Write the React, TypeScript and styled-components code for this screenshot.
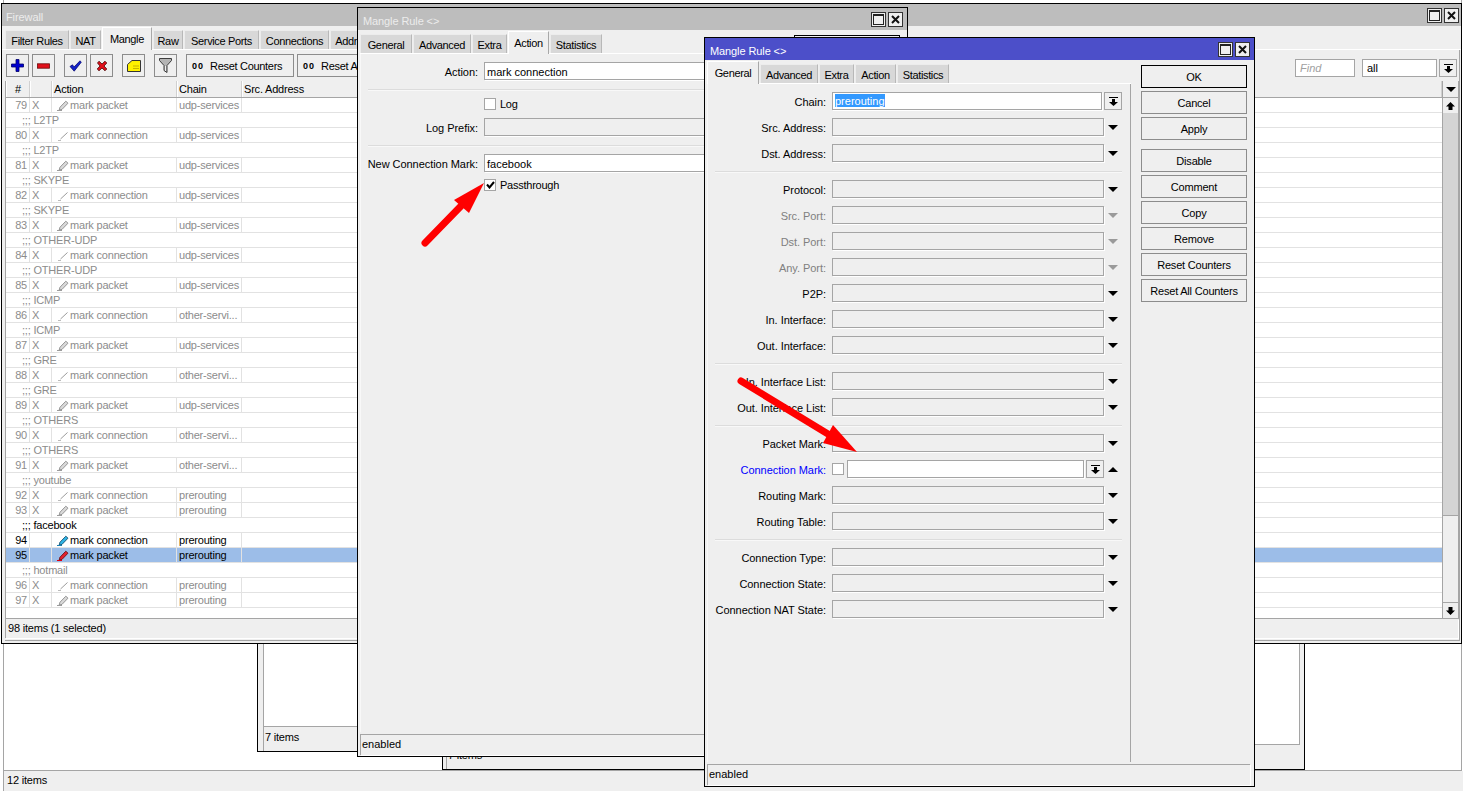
import React from "react";
import styled, { createGlobalStyle } from "styled-components";

const Global = createGlobalStyle`
  html, body { margin: 0; padding: 0; background: #fff; overflow: hidden; }
  body { font-family: "Liberation Sans", Arial, sans-serif; font-size: 11px; color: #000; }
`;

const Desktop = styled.div`
  position: relative; width: 1463px; height: 791px; overflow: hidden; background: #fff;
  display: flex; flex-direction: column;
`;
const BaseList = styled.div`
  flex: 1; margin: 0 1px 0 3px; background: #fff;
  border-left: 1px solid #a5a5a5; border-right: 1px solid #a5a5a5; border-bottom: 1px solid #a5a5a5;
`;
const BaseStatus = styled.div`
  height: 20px; box-sizing: border-box; margin-left: 3px; padding: 0 0 2px 3px; background: #efefef;
  border-left: 1px solid #a5a5a5; display: flex; align-items: center; letter-spacing: -0.2px;
`;

const Win = styled.section<{ $x: number; $y: number; $w: number; $h: number }>`
  position: absolute; left: ${p => p.$x}px; top: ${p => p.$y}px; width: ${p => p.$w}px; height: ${p => p.$h}px;
  box-sizing: border-box; background: #efefef; border: 1px solid #000;
  display: flex; flex-direction: column;
`;
const Title = styled.header<{ $active?: boolean; $pl: number; $pr: number }>`
  flex: none; height: 22px; display: flex; align-items: center; justify-content: space-between;
  padding: 0 ${p => p.$pr}px 0 ${p => p.$pl}px; background: ${p => (p.$active ? "#4c4fc9" : "#bdbdbd")};
  color: ${p => (p.$active ? "#fff" : "#ececec")}; letter-spacing: -0.1px;
`;
const TitleText = styled.span`margin-top: 4px;`;
const WinBtns = styled.div`display: flex; gap: 2px;`;
const WinBtn = styled.div`
  width: 15px; height: 15px; box-sizing: border-box; border: 1px solid #333; background: #efefef;
  display: flex; align-items: center; justify-content: center;
`;

const TabBar = styled.div<{ $pl: number }>`
  flex: none; height: 24px; padding-left: ${p => p.$pl}px; display: flex; align-items: flex-end; gap: 1px;
  box-shadow: inset 0 -1px 0 #fff; box-sizing: border-box;
`;
const Tab = styled.div<{ $w: number; $on?: boolean }>`
  flex: none; width: ${p => p.$w}px; box-sizing: border-box; text-align: center; letter-spacing: -0.35px;
  height: ${p => (p.$on ? 23 : 19)}px; line-height: ${p => (p.$on ? 23 : 20)}px;
  background: ${p => (p.$on ? "#efefef" : "#d8d8d8")};
  border-top: 1px solid ${p => (p.$on ? "#fff" : "#ececec")};
  border-left: 1px solid ${p => (p.$on ? "#fff" : "#ececec")};
  border-right: 1px solid ${p => (p.$on ? "#a8a8a8" : "#b8b8b8")};
  position: relative; margin-bottom: ${p => (p.$on ? 0 : 1)}px;
`;

/* main firewall panel */
const MainPanel = styled.div`
  flex: 1; min-height: 0; margin: 0 1px 2px 3px; display: flex; flex-direction: column;
  border-right: 1px solid #a5a5a5; border-bottom: 1px solid #a5a5a5;
`;
const Toolbar = styled.div`
  flex: none; height: 31px; box-sizing: border-box; padding: 4px 2px 0 1px; display: flex; align-items: flex-start;
`;
const ToolBtn = styled.button<{ $ml?: number }>`
  width: 23px; height: 23px; padding: 0; margin: 0 0 0 ${p => p.$ml ?? 3}px; box-sizing: border-box;
  background: #efefef; border: 1px solid #8c8c8c; display: flex; align-items: center; justify-content: center; flex: none;
`;
const ResetBtn = styled.button<{ $w: number; $ml: number }>`
  width: ${p => p.$w}px; height: 23px; margin: 0 0 0 ${p => p.$ml}px; padding: 0 0 0 5px; box-sizing: border-box; flex: none;
  background: #efefef; border: 1px solid #8c8c8c; display: flex; align-items: center; gap: 6px;
  font: 11px "Liberation Sans", Arial, sans-serif; letter-spacing: -0.3px; white-space: nowrap; overflow: hidden;
`;
const Oo = styled.b`font-size: 9px; letter-spacing: 1px; margin-top: 1px;`;
const ToolRight = styled.div`margin: 5px 0 0 auto; display: flex; align-items: center;`;
const FindBox = styled.div<{ $w: number; $ml: number; $hint?: boolean }>`
  width: ${p => p.$w}px; height: 18px; margin-left: ${p => p.$ml}px; box-sizing: border-box; background: #fff;
  border: 1px solid #a5a5a5; padding-left: 4px; line-height: 17px;
  color: ${p => (p.$hint ? "#a0a0a0" : "#000")}; font-style: ${p => (p.$hint ? "italic" : "normal")};
`;
const ComboBtn = styled.div<{ $ml?: number }>`
  flex: none; width: 18px; height: 18px; box-sizing: border-box; margin-left: ${p => p.$ml ?? 2}px;
  border: 1px solid #a5a5a5; display: flex; align-items: center; justify-content: center; background: #efefef;
`;

const Table = styled.div`
  flex: 1; min-height: 0; display: flex; flex-direction: column; overflow: hidden;
  border-left: 1px solid #a5a5a5; border-right: 1px solid #a5a5a5; border-bottom: 1px solid #a5a5a5; background: #fff;
`;
const HeadRow = styled.div`
  flex: none; height: 17px; box-sizing: border-box; display: flex; background: #efefef; border-bottom: 1px solid #a5a5a5;
`;
const HeadCell = styled.div<{ $w?: number; $center?: boolean }>`
  box-sizing: border-box; width: ${p => (p.$w ? `${p.$w}px` : "auto")}; flex: ${p => (p.$w ? "none" : 1)};
  padding-left: ${p => (p.$center ? 0 : 1)}px; text-align: ${p => (p.$center ? "center" : "left")};
  border-right: 1px solid #d0d0d0; border-left: 1px solid #fff; line-height: 17px; letter-spacing: -0.2px;
`;
const Corner = styled.div`
  flex: none; width: 16px; box-sizing: border-box; display: flex; align-items: center; justify-content: center; border-left: 1px solid #a5a5a5;
`;
const TableBody = styled.div`flex: 1; min-height: 0; display: flex;`;
const Rows = styled.div`flex: 1; min-width: 0; overflow: hidden;`;
const Row = styled.div<{ $sel?: boolean; $off?: boolean }>`
  height: 15px; box-sizing: border-box; display: flex; border-bottom: 1px solid #e2e2e2;
  background: ${p => (p.$sel ? "#9cbde8" : "#fff")}; color: ${p => (p.$off ? "#8c8c8c" : "#000")};
  line-height: 14px; white-space: nowrap; letter-spacing: -0.2px;
`;
const Cell = styled.div<{ $w: number; $right?: boolean; $pl?: number }>`
  flex: none; width: ${p => p.$w}px; box-sizing: border-box; border-right: 1px solid #e2e2e2;
  padding: 0 ${p => (p.$right ? 2 : 0)}px 0 ${p => p.$pl ?? 0}px; text-align: ${p => (p.$right ? "right" : "left")};
  display: flex; align-items: center; justify-content: ${p => (p.$right ? "flex-end" : "flex-start")}; gap: 1px; overflow: hidden;
`;
const Comment = styled.div`padding-left: 16px;`;
const Scroll = styled.div`
  flex: none; width: 16px; box-sizing: border-box; border-left: 1px solid #a5a5a5; display: flex; flex-direction: column; background: #d4d4d4;
`;
const ScrollBtn = styled.div`
  flex: none; height: 15px; background: #efefef; display: flex; align-items: center; justify-content: center;
`;
const ScrollTrack = styled.div`flex: 1;`;
const ScrollThumb = styled.div`flex: none; height: 88px; background: #efefef; border-top: 1px solid #a5a5a5; border-bottom: 1px solid #a5a5a5; box-sizing: border-box;`;
const MainStatus = styled.div`
  flex: none; height: 19px; box-sizing: border-box; margin: 0 1px 2px 0; padding: 0 0 2px 2px; display: flex; align-items: center;
  border-left: 1px solid #a5a5a5; box-shadow: 1px 1px 0 #fff; letter-spacing: -0.2px;
`;

/* background child windows */
const BackList = styled.div<{ $ml: number }>`
  flex: 1; margin: 0 4px 0 ${p => p.$ml}px; background: #fff;
  border-left: 1px solid #a5a5a5; border-right: 1px solid #a5a5a5; border-bottom: 1px solid #a5a5a5;
`;
const BackStatus = styled.div<{ $ml: number }>`
  flex: none; height: 24px; margin-left: ${p => p.$ml}px; padding: 0 0 5px 1px; box-sizing: border-box;
  display: flex; align-items: center; border-left: 1px solid #a5a5a5; letter-spacing: -0.2px;
`;

/* rule windows */
const RuleBody = styled.div`flex: 1; min-height: 0; display: flex;`;
const RuleLeft = styled.div`flex: none; width: 424px; margin-left: 2px; display: flex; flex-direction: column;`;
const FormPanel = styled.div`
  flex: 1; min-height: 0; border-right: 1px solid #a5a5a5; border-left: 1px solid #f8f8f8; box-sizing: border-box;
  padding: 8px 0 0; display: flex; flex-direction: column; gap: 8px;
`;
const FormRow = styled.div`flex: none; height: 18px; display: flex; align-items: center; width: 414px;`;
const CheckRow = styled.div<{ $tight?: boolean }>`
  flex: none; height: 12px; display: flex; align-items: center; margin-top: ${p => (p.$tight ? -1 : 0)}px; letter-spacing: -0.25px;
`;
const Label = styled.div<{ $w: number; $tone?: string }>`
  flex: none; width: ${p => p.$w}px; margin-right: 6px; padding-top: 1px; text-align: right; white-space: nowrap;
  color: ${p => p.$tone ?? "#000"}; letter-spacing: -0.05px;
`;
const Field = styled.div<{ $white?: boolean }>`
  flex: 1; min-width: 0; height: 18px; box-sizing: border-box; border: 1px solid #a5a5a5;
  background: ${p => (p.$white ? "#fff" : "#efefef")}; box-shadow: 1px 1px 0 #fff;
  padding-left: 2px; line-height: 18px; white-space: nowrap; overflow: hidden;
`;
const Sel = styled.span`background: #3399ff; color: #fff; display: inline-block; height: 13px; line-height: 14px; vertical-align: top; margin-top: 1px;`;
const TriSlot = styled.div`flex: none; width: 18px; height: 18px; display: flex; align-items: center; justify-content: center;`;
const Sep = styled.div`flex: none; height: 1px; margin: 1px 8px 0 7px; background: #dcdcdc; box-shadow: 0 1px 0 #f8f8f8;`;
const Check = styled.div<{ $mr: number }>`
  flex: none; width: 12px; height: 12px; box-sizing: border-box; margin-right: ${p => p.$mr}px;
  border: 1px solid #a5a5a5; background: #fff; display: flex; align-items: center; justify-content: center;
`;
const Side = styled.div`flex: none; width: 106px; margin-left: 10px; padding-top: 5px; display: flex; flex-direction: column; gap: 3px;`;
const SideBtn = styled.button<{ $def?: boolean; $gap?: boolean }>`
  height: 23px; padding: 0; box-sizing: border-box; background: #efefef; color: #000;
  border: 1px solid ${p => (p.$def ? "#000" : "#8c8c8c")}; margin-top: ${p => (p.$gap ? 6 : 0)}px;
  font: 11px "Liberation Sans", Arial, sans-serif; letter-spacing: -0.2px;
`;
const RuleStatus = styled.div`
  flex: none; height: 21px; margin: 2px 4px 1px 2px; padding: 0 0 2px 1px; box-sizing: border-box;
  display: flex; align-items: center; border-top: 1px solid #a5a5a5; border-left: 1px solid #a5a5a5;
  box-shadow: 1px 1px 0 #fff;
`;
const Overlay = styled.svg`position: absolute; left: 0; top: 0; width: 1463px; height: 791px; pointer-events: none;`;

/* drawn icons */
const MaxIcon = () => (
  <svg width="11" height="11" viewBox="0 0 11 11"><rect x="0.5" y="0.5" width="10" height="10" fill="none" stroke="#222" /><rect x="0" y="0" width="11" height="2" fill="#222" /></svg>
);
const CloseIcon = () => (
  <svg width="9" height="9" viewBox="0 0 9 9"><path d="M1 1L8 8M8 1L1 8" stroke="#111" strokeWidth="2" /></svg>
);
const TriDown = ({ off }: { off?: boolean }) => (
  <svg width="10" height="5" viewBox="0 0 10 5"><path d="M0 0H10L5 5Z" fill={off ? "#9a9a9a" : "#000"} /></svg>
);
const TriUp = () => (
  <svg width="10" height="5" viewBox="0 0 10 5"><path d="M0 5H10L5 0Z" fill="#000" /></svg>
);
const ComboIcon = () => (
  <svg width="9" height="9" viewBox="0 0 9 9"><path d="M0 0.5H9" stroke="#000" /><path d="M3 2H6V5H9L4.5 9L0 5H3Z" fill="#000" /></svg>
);
const ArrowUp = () => (
  <svg width="9" height="8" viewBox="0 0 9 8"><path d="M4.5 0L9 4.5H6.5V8H2.5V4.5H0Z" fill="#000" /></svg>
);
const ArrowDown = () => (
  <svg width="9" height="8" viewBox="0 0 9 8"><path d="M4.5 8L9 3.5H6.5V0H2.5V3.5H0Z" fill="#000" /></svg>
);
const PlusIcon = () => (
  <svg width="13" height="13" viewBox="0 0 13 13"><path d="M5 0.5H8V5H12.5V8H8V12.5H5V8H0.5V5H5Z" fill="#0000d0" stroke="#00006a" strokeWidth="0.8" /></svg>
);
const MinusIcon = () => (
  <svg width="13" height="6" viewBox="0 0 13 6"><rect x="0.5" y="0.8" width="12" height="4.4" fill="#e0101a" stroke="#6a0a0a" strokeWidth="0.8" /></svg>
);
const CheckIcon = () => (
  <svg width="13" height="12" viewBox="0 0 13 12"><path d="M1 6.5L3.5 4.8L5 7L11 0.8L12.3 2.2L5.2 11.2Z" fill="#1222c8" stroke="#00006a" strokeWidth="0.7" /></svg>
);
const CrossIcon = () => (
  <svg width="12" height="12" viewBox="0 0 12 12"><path d="M1.5 3L3 1.2L6 4L9 1.2L10.8 3L8 6L10.8 9L9 10.8L6 8L3 10.8L1.2 9L4 6Z" fill="#e0101a" stroke="#4a0606" strokeWidth="0.8" /></svg>
);
const NoteIcon = () => (
  <svg width="14" height="12" viewBox="0 0 14 12"><path d="M5 0.5H13.5V11.5H0.5V4.5Z" fill="#fff200" stroke="#333" /><path d="M6 6H12M6 8.5H12" stroke="#c8b400" /></svg>
);
const FunnelIcon = () => (
  <svg width="13" height="15" viewBox="0 0 13 15"><path d="M0.5 0.5H12.5V2.5L8 7.5V14.5L5 12.5V7.5L0.5 2.5Z" fill="#b4b4b4" stroke="#3c3c3c" /><path d="M6.5 8V13" stroke="#eee" /></svg>
);
const CheckMark = () => (
  <svg width="9" height="8" viewBox="0 0 9 8"><path d="M1 3.5L3.5 6.5L8 1" fill="none" stroke="#000" strokeWidth="2" /></svg>
);

type PenKind = "packetOff" | "connOff" | "blue" | "red";
const Pen = ({ kind }: { kind: PenKind }) => {
  if (kind === "connOff")
    return (
      <svg width="12" height="12" viewBox="0 0 12 12"><path d="M3.5 10L10.5 3.5" stroke="#9c9c9c" /><path d="M1 11.5H4" stroke="#bbb" /></svg>
    );
  const fill = kind === "packetOff" ? "#d8d8d8" : kind === "blue" ? "#2fb4e6" : "#e4202c";
  const edge = kind === "packetOff" ? "#8c8c8c" : kind === "blue" ? "#15506e" : "#6e1014";
  const base = kind === "packetOff" ? "#9c9c9c" : kind === "blue" ? "#1a7fb0" : "#e00010";
  return (
    <svg width="12" height="12" viewBox="0 0 12 12">
      <path d="M3 8.2L8.8 2.2L11 4.2L5 10.4L2.2 11Z" fill={fill} stroke={edge} strokeWidth="0.9" />
      <path d="M0 11.5H5" stroke={base} />
    </svg>
  );
};

type RowData =
  | { c: string; off: boolean }
  | { n: number; a: "p" | "c"; chain: string; off: boolean; sel?: boolean };

const U = "udp-services";
const O = "other-servi...";
const P = "prerouting";
const dis = (n: number, a: "p" | "c", chain: string): RowData => ({ n, a, chain, off: true });
const com = (c: string, off = true): RowData => ({ c, off });
const rows: RowData[] = [
  dis(79, "p", U), com("L2TP"), dis(80, "c", U), com("L2TP"), dis(81, "p", U), com("SKYPE"), dis(82, "c", U), com("SKYPE"),
  dis(83, "p", U), com("OTHER-UDP"), dis(84, "c", U), com("OTHER-UDP"), dis(85, "p", U), com("ICMP"), dis(86, "c", O), com("ICMP"),
  dis(87, "p", U), com("GRE"), dis(88, "c", O), com("GRE"), dis(89, "p", U), com("OTHERS"), dis(90, "c", O), com("OTHERS"),
  dis(91, "p", O), com("youtube"), dis(92, "c", P), dis(93, "p", P), com("facebook", false),
  { n: 94, a: "c", chain: P, off: false }, { n: 95, a: "p", chain: P, off: false, sel: true },
  com("hotmail"), dis(96, "c", P), dis(97, "p", P),
];

const penFor = (r: { n: number; a: "p" | "c"; off: boolean; sel?: boolean }): PenKind => {
  if (r.sel) return "red";
  if (!r.off) return "blue";
  return r.a === "p" ? "packetOff" : "connOff";
};

const TitleBar = ({ text, active, pl, pr }: { text: string; active?: boolean; pl: number; pr: number }) => (
  <Title $active={active} $pl={pl} $pr={pr}>
    <TitleText>{text}</TitleText>
    <WinBtns>
      <WinBtn><MaxIcon /></WinBtn>
      <WinBtn><CloseIcon /></WinBtn>
    </WinBtns>
  </Title>
);

const ruleTabs: [string, number][] = [["General", 52], ["Advanced", 58], ["Extra", 35], ["Action", 41], ["Statistics", 52]];
const sideBtns: { t: string; def?: boolean; gap?: boolean }[] = [
  { t: "OK", def: true }, { t: "Cancel" }, { t: "Apply" }, { t: "Disable", gap: true }, { t: "Comment" },
  { t: "Copy" }, { t: "Remove" }, { t: "Reset Counters" }, { t: "Reset All Counters" },
];

const RuleWindow = ({ x, y, active, tab, children }: { x: number; y: number; active?: boolean; tab: string; children: React.ReactNode }) => (
  <Win $x={x} $y={y} $w={551} $h={750}>
    <TitleBar text="Mangle Rule <>" active={active} pl={5} pr={4} />
    <RuleBody>
      <RuleLeft>
        <TabBar $pl={0}>
          {ruleTabs.map(([t, w]) => (
            <Tab key={t} $w={w} $on={t === tab}>{t}</Tab>
          ))}
        </TabBar>
        <FormPanel>{children}</FormPanel>
      </RuleLeft>
      <Side>
        {sideBtns.map(b => (
          <SideBtn key={b.t} $def={b.def} $gap={b.gap}>{b.t}</SideBtn>
        ))}
      </Side>
    </RuleBody>
    <RuleStatus>enabled</RuleStatus>
  </Win>
);

const GeneralRow = ({ label, off }: { label: string; off?: boolean }) => (
  <FormRow>
    <Label $w={118} $tone={off ? "#808080" : undefined}>{label}</Label>
    <Field />
    <TriSlot><TriDown off={off} /></TriSlot>
  </FormRow>
);

export default function App() {
  return (
    <Desktop>
      <Global />
      <BaseList />
      <BaseStatus>12 items</BaseStatus>

      <Win $x={257} $y={560} $w={700} $h={192}>
        <BackList $ml={5} />
        <BackStatus $ml={5}>7 items</BackStatus>
      </Win>
      <Win $x={442} $y={580} $w={863} $h={190}>
        <BackList $ml={3} />
        <BackStatus $ml={3}>7 items</BackStatus>
      </Win>

      <Win $x={1} $y={3} $w={1461} $h={641}>
        <TitleBar text="Firewall" pl={4} pr={2} />
        <TabBar $pl={3}>
          <Tab $w={64}>Filter Rules</Tab>
          <Tab $w={31}>NAT</Tab>
          <Tab $w={50} $on>Mangle</Tab>
          <Tab $w={30}>Raw</Tab>
          <Tab $w={75}>Service Ports</Tab>
          <Tab $w={69}>Connections</Tab>
          <Tab $w={72}>Address Lists</Tab>
          <Tab $w={90}>Layer7 Protocols</Tab>
        </TabBar>
        <MainPanel>
          <Toolbar>
            <ToolBtn $ml={0}><PlusIcon /></ToolBtn>
            <ToolBtn><MinusIcon /></ToolBtn>
            <ToolBtn $ml={9}><CheckIcon /></ToolBtn>
            <ToolBtn><CrossIcon /></ToolBtn>
            <ToolBtn $ml={9}><NoteIcon /></ToolBtn>
            <ToolBtn $ml={9}><FunnelIcon /></ToolBtn>
            <ResetBtn $w={108} $ml={9}><Oo>00</Oo>Reset Counters</ResetBtn>
            <ResetBtn $w={120} $ml={3}><Oo>00</Oo>Reset All Counters</ResetBtn>
            <ToolRight>
              <FindBox $w={60} $ml={0} $hint>Find</FindBox>
              <FindBox $w={75} $ml={7}>all</FindBox>
              <ComboBtn><ComboIcon /></ComboBtn>
            </ToolRight>
          </Toolbar>
          <Table>
            <HeadRow>
              <HeadCell $w={24} $center>#</HeadCell>
              <HeadCell $w={22} />
              <HeadCell $w={125}>Action</HeadCell>
              <HeadCell $w={65}>Chain</HeadCell>
              <HeadCell>Src. Address</HeadCell>
              <Corner><TriDown /></Corner>
            </HeadRow>
            <TableBody>
              <Rows>
                {rows.map((r, i) =>
                  "c" in r ? (
                    <Row key={i} $off={r.off}><Comment>;;; {r.c}</Comment></Row>
                  ) : (
                    <Row key={i} $off={r.off} $sel={r.sel}>
                      <Cell $w={24} $right>{r.n}</Cell>
                      <Cell $w={22} $pl={2}>{r.off ? "X" : ""}</Cell>
                      <Cell $w={125} $pl={5}>
                        <Pen kind={penFor(r)} />
                        {r.a === "p" ? "mark packet" : "mark connection"}
                      </Cell>
                      <Cell $w={65} $pl={2}>{r.chain}</Cell>
                    </Row>
                  )
                )}
              </Rows>
              <Scroll>
                <ScrollBtn><ArrowUp /></ScrollBtn>
                <ScrollTrack />
                <ScrollThumb />
                <ScrollBtn><ArrowDown /></ScrollBtn>
              </Scroll>
            </TableBody>
          </Table>
          <MainStatus>98 items (1 selected)</MainStatus>
        </MainPanel>
      </Win>

      <RuleWindow x={357} y={7} tab="Action">
        <FormRow>
          <Label $w={117}>Action:</Label>
          <Field $white>mark connection</Field>
          <ComboBtn><ComboIcon /></ComboBtn>
        </FormRow>
        <Sep />
        <CheckRow>
          <Label $w={117} />
          <Check $mr={4} />
          Log
        </CheckRow>
        <FormRow>
          <Label $w={117}>Log Prefix:</Label>
          <Field />
        </FormRow>
        <Sep />
        <FormRow>
          <Label $w={117}>New Connection Mark:</Label>
          <Field $white>facebook</Field>
        </FormRow>
        <CheckRow $tight>
          <Label $w={117} />
          <Check $mr={4}><CheckMark /></Check>
          Passthrough
        </CheckRow>
      </RuleWindow>

      <RuleWindow x={704} y={37} active tab="General">
        <FormRow>
          <Label $w={118}>Chain:</Label>
          <Field $white><Sel>prerouting</Sel></Field>
          <ComboBtn><ComboIcon /></ComboBtn>
        </FormRow>
        <GeneralRow label="Src. Address:" />
        <GeneralRow label="Dst. Address:" />
        <Sep />
        <GeneralRow label="Protocol:" />
        <GeneralRow label="Src. Port:" off />
        <GeneralRow label="Dst. Port:" off />
        <GeneralRow label="Any. Port:" off />
        <GeneralRow label="P2P:" />
        <GeneralRow label="In. Interface:" />
        <GeneralRow label="Out. Interface:" />
        <Sep />
        <GeneralRow label="In. Interface List:" />
        <GeneralRow label="Out. Interface List:" />
        <Sep />
        <GeneralRow label="Packet Mark:" />
        <FormRow>
          <Label $w={118} $tone="#0000ff">Connection Mark:</Label>
          <Check $mr={3} />
          <Field $white />
          <ComboBtn><ComboIcon /></ComboBtn>
          <TriSlot><TriUp /></TriSlot>
        </FormRow>
        <GeneralRow label="Routing Mark:" />
        <GeneralRow label="Routing Table:" />
        <Sep />
        <GeneralRow label="Connection Type:" />
        <GeneralRow label="Connection State:" />
        <GeneralRow label="Connection NAT State:" />
      </RuleWindow>

      <Overlay viewBox="0 0 1463 791">
        <path d="M425 243L461 206" stroke="#ff0000" strokeWidth="7" strokeLinecap="round" />
        <path d="M484 183L454 200L469 213Z" fill="#ff0000" />
        <path d="M741 381L828 434" stroke="#ff0000" strokeWidth="7" strokeLinecap="round" />
        <path d="M857 452L833 425L823 443Z" fill="#ff0000" />
      </Overlay>
    </Desktop>
  );
}
